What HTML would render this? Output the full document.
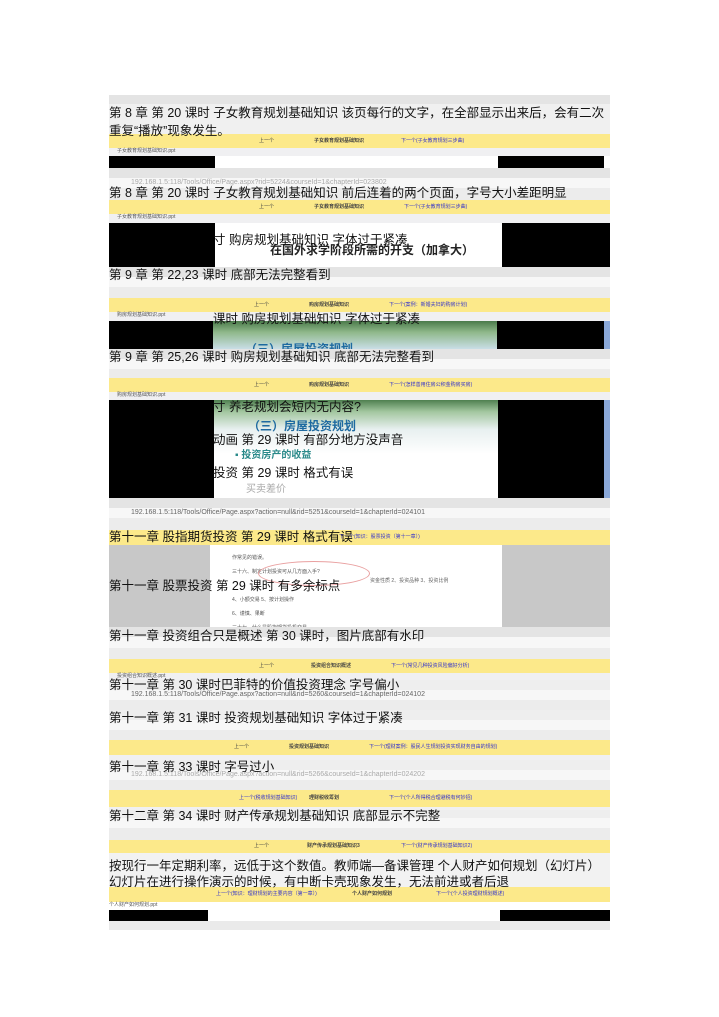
<!DOCTYPE html>
<html><head><meta charset="utf-8"><style>
body{margin:0;width:719px;height:1017px;background:#fff;position:relative;overflow:hidden;font-family:"Liberation Sans","Noto Sans CJK SC",sans-serif}
div{position:absolute;box-sizing:border-box}
.tab{left:109px;width:501px;background:#e4e4e4}
.url{left:109px;width:501px;background:#f7f7f7;font-size:7px;color:#aaa;padding-left:22px;line-height:10px}
.bm{left:109px;width:501px;background:#ececec;font-size:5px;color:#888;padding-left:8px;line-height:10px}
.y{left:109px;width:501px;background:#fce98a;font-size:5px;color:#444;line-height:14px}
.fb{left:109px;width:501px;background:#f0f0f2;font-size:5px;color:#555;padding-left:8px;line-height:7px}
.k{background:#000}
.t{left:109px;font-size:12.5px;color:#111;white-space:nowrap;line-height:15px;z-index:2}
.y span{position:absolute;top:0}
.bl{color:#33c}
</style></head><body>
<div class="tab" style="top:95px;height:9px"></div>
<div class="bm" style="top:104px;height:30px;background:#f0f0f0"></div>
<div class="t" style="top:104px;line-height:18px">第 8 章  第 20 课时  子女教育规划基础知识  该页每行的文字，在全部显示出来后，会有二次<br>重复“播放”现象发生。</div>
<div class="y" style="top:134px;height:14px"><span style="left:150px">上一个</span><span style="left:205px;font-weight:bold">子女教育规划基础知识</span><span class="bl" style="left:292px">下一个(子女教育规划三步曲)</span></div>
<div class="fb" style="top:148px;height:8px">子女教育规划基础知识.ppt</div>
<div class="k" style="left:109px;top:156px;width:106px;height:12px"></div>
<div class="k" style="left:498px;top:156px;width:106px;height:12px"></div>
<div class="tab" style="top:168px;height:10px"></div>
<div class="url" style="top:178px;height:10px">192.168.1.5:118/Tools/Office/Page.aspx?rid=5224&amp;courseId=1&amp;chapterId=023802</div>
<div class="bm" style="top:188px;height:12px"></div>
<div class="t" style="top:186px">第 8 章 第 20 课时 子女教育规划基础知识  前后连着的两个页面，字号大小差距明显</div>
<div class="y" style="top:200px;height:14px"><span style="left:150px">上一个</span><span style="left:205px;font-weight:bold">子女教育规划基础知识</span><span class="bl" style="left:295px">下一个(子女教育规划三步曲)</span></div>
<div class="fb" style="top:214px;height:9px">子女教育规划基础知识.ppt</div>
<div class="k" style="left:109px;top:223px;width:106px;height:44px"></div>
<div class="k" style="left:502px;top:223px;width:108px;height:44px"></div>
<div style="left:270px;top:241px;font-size:12px;font-weight:bold;color:#222;white-space:nowrap">在国外求学阶段所需的开支（加拿大）</div>
<div class="t" style="top:233px;left:213px">寸 购房规划基础知识 字体过于紧凑</div>
<div class="tab" style="top:267px;height:10px"></div>
<div class="url" style="top:277px;height:10px"></div>
<div class="bm" style="top:287px;height:11px"></div>
<div class="t" style="top:268px">第 9 章  第 22,23 课时 底部无法完整看到</div>
<div class="y" style="top:298px;height:14px"><span style="left:145px">上一个</span><span style="left:200px;font-weight:bold">购房规划基础知识</span><span class="bl" style="left:280px">下一个(案例：新婚夫妇的购房计划)</span></div>
<div class="fb" style="top:312px;height:9px">购房规划基础知识.ppt</div>
<div style="left:213px;top:321px;width:284px;height:28px;background:linear-gradient(#4a7a4a,#8fb88a 40%,#c9dee6)"></div>
<div style="left:245px;top:340px;font-size:12px;font-weight:bold;color:#1e6aa0;white-space:nowrap">（三）房屋投资规划</div>
<div class="k" style="left:109px;top:321px;width:104px;height:28px"></div>
<div class="k" style="left:497px;top:321px;width:107px;height:28px"></div>
<div style="left:604px;top:321px;width:6px;height:28px;background:#8aa8d8"></div>
<div class="t" style="top:312px;left:213px">课时 购房规划基础知识 字体过于紧凑</div>
<div class="tab" style="top:349px;height:10px"></div>
<div class="url" style="top:359px;height:10px"></div>
<div class="bm" style="top:369px;height:9px"></div>
<div class="t" style="top:350px">第 9 章  第 25,26 课时  购房规划基础知识  底部无法完整看到</div>
<div class="y" style="top:378px;height:14px"><span style="left:145px">上一个</span><span style="left:200px;font-weight:bold">购房规划基础知识</span><span class="bl" style="left:280px">下一个(怎样善用住房公积金购房买房)</span></div>
<div class="fb" style="top:392px;height:8px">购房规划基础知识.ppt</div>
<div style="left:214px;top:400px;width:284px;height:98px;background:linear-gradient(#4f8050,#a3c7a0 12%,#e8f0f0 30%,#fff 55%)"></div>
<div style="left:248px;top:417px;font-size:12px;font-weight:bold;color:#1e6aa0;white-space:nowrap">（三）房屋投资规划</div>
<div style="left:235px;top:446px;font-size:10px;font-weight:bold;color:#2a8a8a;white-space:nowrap">▪ 投资房产的收益</div>
<div style="left:246px;top:480px;font-size:10px;color:#aaa;white-space:nowrap">买卖差价</div>
<div class="t" style="top:400px;left:213px">寸 养老规划会短内无内容?</div>
<div class="t" style="top:433px;left:213px">动画 第 29 课时 有部分地方没声音</div>
<div class="t" style="top:466px;left:213px">投资 第 29 课时 格式有误</div>
<div class="k" style="left:109px;top:400px;width:105px;height:98px"></div>
<div class="k" style="left:498px;top:400px;width:106px;height:98px"></div>
<div style="left:604px;top:400px;width:6px;height:98px;background:#8aa8d8"></div>
<div class="tab" style="top:498px;height:10px"></div>
<div class="url" style="top:508px;height:10px;color:#666">192.168.1.5:118/Tools/Office/Page.aspx?action=null&amp;rid=5251&amp;courseId=1&amp;chapterId=024101</div>
<div class="bm" style="top:518px;height:12px"></div>
<div class="y" style="top:530px;height:15px"><span class="bl" style="left:230px">下一个(知识：股票投资（第十一章）)</span></div>
<div class="t" style="top:530px">第十一章 股指期货投资 第 29 课时  格式有误</div>
<div style="left:109px;top:545px;width:501px;height:82px;background:#c8c8c8"></div>
<div style="left:210px;top:545px;width:292px;height:82px;background:#fff;font-size:5px;color:#555;padding:6px 0 0 22px;line-height:14px">作常见的错误。<br>三十六、制定计划投资可从几方面入手?<br><br>4、小额交易  5、按计划操作<br>6、谨慎、果断<br>三十七、什么是股指期货投机交易</div>
<div style="left:370px;top:577px;font-size:5px;color:#666">资金性质  2、投资品种  3、投资比例</div>
<div style="left:258px;top:561px;width:112px;height:25px;border:1px solid #e9a0a0;border-radius:50%"></div>
<div class="t" style="top:579px">第十一章 股票投资 第 29 课时 有多余标点</div>
<div class="tab" style="top:627px;height:10px"></div>
<div class="url" style="top:637px;height:11px"></div>
<div class="bm" style="top:648px;height:11px"></div>
<div class="t" style="top:629px">第十一章 投资组合只是概述  第 30 课时，图片底部有水印</div>
<div class="y" style="top:659px;height:14px"><span style="left:150px">上一个</span><span style="left:202px;font-weight:bold">投资组合知识概述</span><span class="bl" style="left:282px">下一个(常见几种投资风险偏好分析)</span></div>
<div class="fb" style="top:673px;height:7px">投资组合知识概述.ppt</div>
<div class="tab" style="top:680px;height:10px;background:#eee"></div>
<div class="url" style="top:690px;height:10px;color:#666">192.168.1.5:118/Tools/Office/Page.aspx?action=null&amp;rid=5260&amp;courseId=1&amp;chapterId=024102</div>
<div class="bm" style="top:700px;height:10px"></div>
<div class="t" style="top:678px">第十一章 第 30 课时巴菲特的价值投资理念  字号偏小</div>
<div class="tab" style="top:710px;height:10px;background:#eee"></div>
<div class="url" style="top:720px;height:10px"></div>
<div class="bm" style="top:730px;height:10px"></div>
<div class="t" style="top:711px">第十一章 第 31 课时 投资规划基础知识 字体过于紧凑</div>
<div class="y" style="top:740px;height:15px"><span style="left:125px">上一个</span><span style="left:180px;font-weight:bold">投资规划基础知识</span><span class="bl" style="left:260px">下一个(理财案例：股民人生规划投资实现财务自由的规划)</span></div>
<div class="fb" style="top:755px;height:5px"></div>
<div class="tab" style="top:760px;height:10px;background:#eee"></div>
<div class="url" style="top:770px;height:10px">192.168.1.5:118/Tools/Office/Page.aspx?action=null&amp;rid=5266&amp;courseId=1&amp;chapterId=024202</div>
<div class="bm" style="top:780px;height:10px"></div>
<div class="t" style="top:760px">第十一章 第 33 课时  字号过小</div>
<div class="y" style="top:790px;height:17px;line-height:17px"><span class="bl" style="left:130px">上一个(税收规划基础知识)</span><span style="left:200px;font-weight:bold">理财税收筹划</span><span class="bl" style="left:280px">下一个(个人所得税合理避税有何妙招)</span></div>
<div class="fb" style="top:807px;height:3px"></div>
<div class="tab" style="top:810px;height:8px;background:#eee"></div>
<div class="url" style="top:818px;height:10px"></div>
<div class="bm" style="top:828px;height:12px"></div>
<div class="t" style="top:809px">第十二章  第 34 课时 财产传承规划基础知识  底部显示不完整</div>
<div class="y" style="top:840px;height:13px;line-height:13px"><span style="left:145px">上一个</span><span style="left:198px;font-weight:bold">财产传承规划基础知识3</span><span class="bl" style="left:292px">下一个(财产传承规划基础知识2)</span></div>
<div class="tab" style="top:853px;height:34px;background:#f2f2f2"></div>
<div class="t" style="top:858px;line-height:16px">按现行一年定期利率，远低于这个数值。教师端—备课管理 个人财产如何规划（幻灯片）<br>幻灯片在进行操作演示的时候，有中断卡壳现象发生，无法前进或者后退</div>
<div class="y" style="top:887px;height:15px"><span class="bl" style="left:107px">上一个(知识：理财规划的主要内容（第一章）)</span><span style="left:243px;font-weight:bold">个人财产如何规划</span><span class="bl" style="left:327px">下一个(个人投资理财规划概述)</span></div>
<div class="fb" style="top:902px;height:8px;background:#fff;padding-left:0">个人财产如何规划.ppt</div>
<div class="k" style="left:109px;top:910px;width:99px;height:11px"></div>
<div class="k" style="left:500px;top:910px;width:110px;height:11px"></div>
<div class="tab" style="top:921px;height:9px;background:#eaeaea"></div>
</body></html>
